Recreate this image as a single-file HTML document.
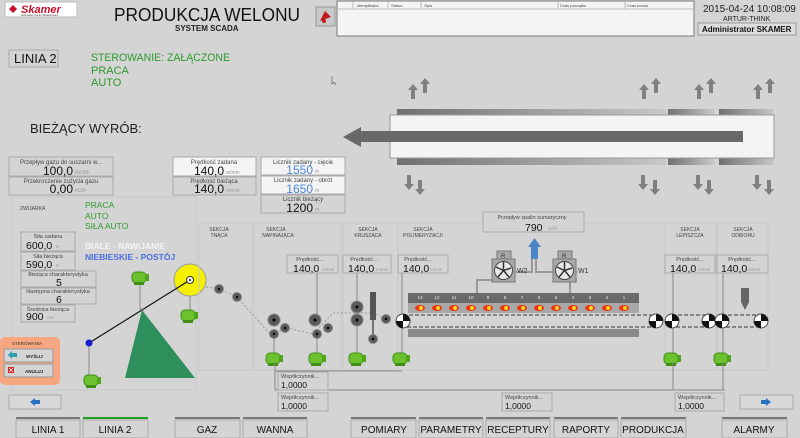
<!DOCTYPE html>
<html><head><meta charset="utf-8"><style>
body{margin:0;width:800px;height:438px;overflow:hidden;background:#d4d4d4;font-family:"Liberation Sans",sans-serif}
svg{display:block}
text{font-family:"Liberation Sans",sans-serif}
</style></head><body>
<svg width="800" height="438" viewBox="0 0 800 438" xmlns="http://www.w3.org/2000/svg">
<defs>
<linearGradient id="bar" x1="0" x2="1"><stop offset="0" stop-color="#707070"/><stop offset="1" stop-color="#c8c8c8"/></linearGradient>
<g id="up"><rect x="-2" y="5" width="4" height="10" fill="#808080"/><polygon points="-5,6 5,6 0,0" fill="#808080"/></g>
<g id="dn"><rect x="-2" y="0" width="4" height="10" fill="#808080"/><polygon points="-5,9 5,9 0,15" fill="#808080"/></g>
<g id="mot"><rect x="-8" y="-5" width="14" height="11" rx="4" fill="#6cc12e" stroke="#3f8f16"/><rect x="5" y="-3" width="4" height="7" fill="#4fa51c"/><rect x="-6" y="5" width="10" height="3" fill="#3f8f16"/></g>
<g id="rl"><circle r="6" fill="#5a5a5a" stroke="#888"/><circle r="1.5" fill="#000"/></g>
<g id="rs"><circle r="4.5" fill="#5a5a5a" stroke="#888"/><circle r="1.2" fill="#000"/></g>
<g id="end"><circle r="7" fill="#fff" stroke="#444"/><path d="M0,-7 A7,7 0 0,1 7,0 L0,0Z M0,7 A7,7 0 0,1 -7,0 L0,0Z" fill="#111"/></g>
<g id="fan"><rect x="0" y="0" width="23" height="23" fill="#a8a8a8" stroke="#777"/><circle cx="11.5" cy="11.5" r="9" fill="#e8e8e8" stroke="#444"/><path d="M11.5,11.5 L11.5,3 M11.5,11.5 L19,9 M11.5,11.5 L17,18 M11.5,11.5 L6,18 M11.5,11.5 L4,8" stroke="#333" stroke-width="1.5"/></g>
</defs>

<!-- header -->
<rect x="5" y="2" width="72" height="15" fill="#fff" stroke="#bbb"/>
<polygon points="9,9 13,5 17,9 13,13" fill="#c8102e"/>
<text x="21" y="13" font-size="11" font-weight="bold" font-style="italic" fill="#c8102e">Skamer</text>
<text x="21" y="16" font-size="2.5" fill="#333">Automation Control Measurement</text>
<text x="114" y="21" font-size="18" fill="#111" textLength="186" lengthAdjust="spacingAndGlyphs">PRODUKCJA WELONU</text>
<text x="175" y="31" font-size="8" font-weight="bold" fill="#222">SYSTEM SCADA</text>
<rect x="316" y="7" width="19" height="19" fill="#c8c8c8" stroke="#999"/>
<path d="M320,21 L325,11 L331,17 Z" fill="#c01818"/><circle cx="324" cy="21" r="2" fill="#c01818"/>
<rect x="337" y="1" width="357" height="35" fill="#f4f4f4" stroke="#777"/>
<line x1="337" y1="9" x2="694" y2="9" stroke="#bbb"/>
<g font-size="4" fill="#444"><text x="357" y="7">Identyfikator</text><text x="391" y="7">Status</text><text x="424" y="7">Opis</text><text x="560" y="7">Czas początku</text><text x="627" y="7">Czas końca</text></g>
<g stroke="#bbb"><line x1="353" y1="2" x2="353" y2="9"/><line x1="388" y1="2" x2="388" y2="9"/><line x1="421" y1="2" x2="421" y2="9"/><line x1="558" y1="2" x2="558" y2="9"/><line x1="625" y1="2" x2="625" y2="9"/></g>
<text x="703" y="12" font-size="10" fill="#222">2015-04-24 10:08:09</text>
<text x="723" y="21" font-size="7" fill="#222">ARTUR-THINK</text>
<rect x="698" y="23" width="98" height="12" fill="#ddd" stroke="#999"/>
<text x="702" y="32" font-size="8" font-weight="bold" fill="#111">Administrator SKAMER</text>

<rect x="9" y="50" width="49" height="17" fill="#d4d4d4" stroke="#aaa"/>
<text x="14" y="63" font-size="13" fill="#111">LINIA 2</text>
<g font-size="11" fill="#2e9a2e"><text x="91" y="61" textLength="139" lengthAdjust="spacingAndGlyphs">STEROWANIE: ZAŁĄCZONE</text><text x="91" y="74">PRACA</text><text x="91" y="86">AUTO</text></g>
<text x="30" y="133" font-size="13" fill="#222">BIEŻĄCY WYRÓB:</text>
<path d="M332,76 L332,84 L334,82 L336,85" stroke="#666" fill="none" stroke-width="0.7"/>

<!-- product -->
<rect x="397" y="109" width="269" height="6" fill="url(#bar)"/><rect x="668" y="109" width="46" height="6" fill="url(#bar)"/><rect x="719" y="109" width="55" height="6" fill="url(#bar)"/>
<rect x="397" y="158" width="269" height="7" fill="url(#bar)"/><rect x="668" y="158" width="46" height="7" fill="url(#bar)"/><rect x="719" y="158" width="55" height="7" fill="url(#bar)"/>
<rect x="390" y="115" width="384" height="43" fill="#f4f4f4" stroke="#999"/>
<rect x="360" y="131" width="383" height="11" fill="#686868"/>
<polygon points="343,137 361,127 361,147" fill="#686868"/>
<use href="#up" x="413" y="84"/><use href="#up" x="425" y="78"/><use href="#up" x="644" y="84"/><use href="#up" x="656" y="78"/><use href="#up" x="699" y="84"/><use href="#up" x="711" y="78"/><use href="#up" x="758" y="84"/><use href="#up" x="770" y="78"/>
<use href="#dn" x="409" y="175"/><use href="#dn" x="420" y="180"/><use href="#dn" x="643" y="175"/><use href="#dn" x="655" y="180"/><use href="#dn" x="698" y="175"/><use href="#dn" x="709" y="180"/><use href="#dn" x="757" y="175"/><use href="#dn" x="769" y="180"/>

<!-- value boxes -->
<g stroke="#aaa" fill="#d4d4d4">
<rect x="9" y="157" width="104" height="19"/><rect x="9" y="177" width="104" height="18"/>
<rect x="173" y="157" width="83" height="19" fill="#f4f4f4"/><rect x="173" y="177" width="83" height="18"/>
<rect x="261" y="157" width="84" height="18" fill="#f4f4f4"/><rect x="261" y="176" width="84" height="18" fill="#f4f4f4"/><rect x="261" y="195" width="84" height="18"/>
</g>
<g font-size="6" fill="#444" text-anchor="middle">
<text x="61" y="164">Przepływ gazu do suszarni w...</text><text x="61" y="183">Przekroczenie zużycia gazu</text>
<text x="214" y="164">Prędkość zadana</text><text x="214" y="183">Prędkość bieżąca</text>
<text x="303" y="164">Licznik zadany - cięcie</text><text x="303" y="182">Licznik zadany - obrót</text><text x="303" y="201">Licznik bieżący</text>
</g>
<g font-size="12" fill="#111" text-anchor="end">
<text x="73" y="175">100,0</text><text x="73" y="193">0,00</text>
<text x="224" y="175">140,0</text><text x="224" y="193">140,0</text>
<text x="313" y="174" fill="#4a86e0">1550</text><text x="313" y="193" fill="#4a86e0">1650</text><text x="313" y="212">1200</text>
</g>
<g font-size="5" fill="#999"><text x="75" y="174">Nm3/h</text><text x="75" y="192">m3/h</text><text x="226" y="174">m/min</text><text x="226" y="192">m/min</text><text x="315" y="173">m</text><text x="315" y="192">m</text><text x="315" y="211">m</text></g>

<!-- zwijarka -->
<rect x="12" y="197" width="184" height="193" fill="none" stroke="#c8c8c8"/>
<text x="20" y="210" font-size="5" fill="#444">ZWIJARKA</text>
<g font-size="8.5" fill="#2e9a2e"><text x="85" y="208">PRACA</text><text x="85" y="219">AUTO</text><text x="85" y="229">SIŁA AUTO</text></g>
<text x="85" y="249" font-size="8.5" font-weight="bold" fill="#f4f4f4">BIALE - NAWIJANIE</text>
<text x="85" y="260" font-size="8.5" font-weight="bold" fill="#4a6ee0">NIEBIESKIE - POSTÓJ</text>
<g stroke="#aaa" fill="#d4d4d4"><rect x="21" y="232" width="54" height="19"/><rect x="21" y="252" width="54" height="18"/><rect x="21" y="271" width="75" height="16"/><rect x="21" y="288" width="75" height="16"/><rect x="21" y="305" width="54" height="17"/></g>
<g font-size="5.5" fill="#444" text-anchor="middle"><text x="48" y="238">Siła zadana</text><text x="48" y="258">Siła bieżąca</text><text x="58" y="276">Bieżąca charakterystyka</text><text x="58" y="293">Następna charakterystyka</text><text x="48" y="311">Średnica bieżąca</text></g>
<g font-size="10.5" fill="#111"><text x="26" y="249">600,0</text><text x="26" y="268">590,0</text><text x="56" y="286">5</text><text x="56" y="303">6</text><text x="26" y="320">900</text></g>
<g font-size="4.5" fill="#999"><text x="56" y="248">N</text><text x="56" y="267">N</text><text x="47" y="319">mm</text></g>
<line x1="140" y1="283" x2="140" y2="310" stroke="#888"/><line x1="89" y1="343" x2="89" y2="375" stroke="#888"/><line x1="190" y1="280" x2="190" y2="310" stroke="#888"/>
<polygon points="142,310 125,378 195,378" fill="#2f8f5c"/>
<circle cx="190" cy="280" r="16" fill="#f5f000" stroke="#999"/>
<line x1="89" y1="343" x2="190" y2="280" stroke="#111" stroke-width="1.2"/>
<circle cx="142" cy="310" r="1.5" fill="#666"/>
<circle cx="190" cy="280" r="3.5" fill="#fff" stroke="#333"/><circle cx="190" cy="280" r="1" fill="#000"/>
<circle cx="89" cy="343" r="3.5" fill="#1a1ad0"/>
<use href="#mot" x="140" y="277"/><use href="#mot" x="189" y="315"/><use href="#mot" x="92" y="380"/>

<rect x="0" y="337" width="60" height="48" rx="5" fill="#f8a680"/>
<text x="12" y="345" font-size="4.5" fill="#333">STEROWANIA</text>
<rect x="4" y="349" width="49" height="13" fill="#d4d4d4" stroke="#999"/><rect x="4" y="364" width="49" height="13" fill="#d4d4d4" stroke="#999"/>
<polygon points="8,355 12,351 12,353 17,353 17,357 12,357 12,359" fill="#2aa0b0"/>
<rect x="8" y="367" width="6" height="6" fill="#e02020"/><path d="M9,368 L13,372 M13,368 L9,372" stroke="#fff" stroke-width="0.8"/>
<text x="26" y="358" font-size="4.5" font-weight="bold" fill="#222">WYŚLIJ</text><text x="25" y="373" font-size="4.5" font-weight="bold" fill="#222">ANULUJ</text>

<!-- sections -->
<g fill="none" stroke="#c8c8c8"><rect x="199" y="223" width="53" height="147"/><rect x="254" y="223" width="87" height="147"/><rect x="343" y="223" width="55" height="147"/><rect x="398" y="223" width="267" height="147"/><rect x="665" y="223" width="51" height="147"/><rect x="717" y="223" width="51" height="147"/></g>
<g font-size="5" fill="#444" text-anchor="middle">
<text x="219" y="231">SEKCJA</text><text x="219" y="237">TNĄCA</text>
<text x="276" y="231">SEKCJA</text><text x="278" y="237">NAPINAJĄCA</text>
<text x="368" y="231">SEKCJA</text><text x="368" y="237">KRUSZĄCA</text>
<text x="423" y="231">SEKCJA</text><text x="423" y="237">POLIMERYZACJI</text>
<text x="690" y="231">SEKCJA</text><text x="690" y="237">LEPISZCZA</text>
<text x="743" y="231">SEKCJA</text><text x="743" y="237">ODBIORU</text>
</g>
<g stroke="#aaa" fill="#d4d4d4"><rect x="287" y="255" width="51" height="18"/><rect x="343" y="255" width="48" height="18"/><rect x="398" y="255" width="50" height="18"/><rect x="665" y="255" width="50" height="18"/><rect x="717" y="255" width="51" height="18"/><rect x="483" y="212" width="101" height="20"/></g>
<g font-size="5.5" fill="#444" text-anchor="middle"><text x="310" y="261">Prędkość...</text><text x="364" y="261">Prędkość...</text><text x="418" y="261">Prędkość...</text><text x="690" y="261">Prędkość...</text><text x="742" y="261">Prędkość...</text><text x="532" y="219">Przepływ spalin sumaryczny</text></g>
<g font-size="10.5" fill="#111"><text x="293" y="272">140,0</text><text x="348" y="272">140,0</text><text x="403" y="272">140,0</text><text x="670" y="272">140,0</text><text x="721" y="272">140,0</text><text x="525" y="231">790</text></g>
<g font-size="4.5" fill="#999"><text x="322" y="271">m/min</text><text x="376" y="271">m/min</text><text x="430" y="271">m/min</text><text x="698" y="271">m/min</text><text x="748" y="271">m/min</text><text x="548" y="230">m³/h</text></g>

<!-- web path -->
<path d="M206,287 L219,289 L237,297 L270,334 L288,328 L313,334 L333,313 L375,313 L384,319" fill="none" stroke="#999" stroke-dasharray="2,2"/>
<g stroke="#888"><line x1="317" y1="273" x2="317" y2="320"/><line x1="357" y1="273" x2="357" y2="300"/><line x1="274" y1="338" x2="274" y2="355"/><line x1="317" y1="338" x2="317" y2="355"/><line x1="357" y1="325" x2="357" y2="355"/><line x1="402" y1="273" x2="402" y2="355"/><line x1="673" y1="273" x2="673" y2="355"/><line x1="723" y1="273" x2="723" y2="355"/></g>
<use href="#rs" x="219" y="289"/><use href="#rs" x="237" y="297"/>
<use href="#rl" x="274" y="320"/><use href="#rs" x="274" y="334"/><use href="#rs" x="285" y="328"/>
<use href="#rl" x="315" y="320"/><use href="#rs" x="317" y="334"/><use href="#rs" x="328" y="328"/>
<use href="#rl" x="357" y="307"/><use href="#rl" x="357" y="320"/>
<rect x="370" y="292" width="6" height="28" fill="#555"/><line x1="373" y1="320" x2="373" y2="339" stroke="#111"/>
<use href="#rs" x="373" y="339"/><use href="#rs" x="386" y="319"/>
<use href="#mot" x="274" y="358"/><use href="#mot" x="317" y="358"/><use href="#mot" x="357" y="358"/><use href="#mot" x="401" y="358"/><use href="#mot" x="672" y="358"/><use href="#mot" x="722" y="358"/>

<!-- oven -->
<rect x="408" y="293" width="231" height="10" fill="#6a6a6a"/>
<g font-size="4.5" fill="#eee" text-anchor="middle"><text x="420" y="299">13</text><text x="437" y="299">12</text><text x="454" y="299">11</text><text x="471" y="299">10</text><text x="488" y="299">9</text><text x="505" y="299">8</text><text x="522" y="299">7</text><text x="539" y="299">6</text><text x="556" y="299">5</text><text x="573" y="299">4</text><text x="590" y="299">3</text><text x="607" y="299">2</text><text x="624" y="299">1</text></g>
<rect x="408" y="303" width="231" height="10" fill="#a8a8a8"/>
<g fill="#f03010"><ellipse cx="420" cy="308" rx="5" ry="3"/><ellipse cx="437" cy="308" rx="5" ry="3"/><ellipse cx="454" cy="308" rx="5" ry="3"/><ellipse cx="471" cy="308" rx="5" ry="3"/><ellipse cx="488" cy="308" rx="5" ry="3"/><ellipse cx="505" cy="308" rx="5" ry="3"/><ellipse cx="522" cy="308" rx="5" ry="3"/><ellipse cx="539" cy="308" rx="5" ry="3"/><ellipse cx="556" cy="308" rx="5" ry="3"/><ellipse cx="573" cy="308" rx="5" ry="3"/><ellipse cx="590" cy="308" rx="5" ry="3"/><ellipse cx="607" cy="308" rx="5" ry="3"/><ellipse cx="624" cy="308" rx="5" ry="3"/></g>
<g fill="#ffd820"><circle cx="421" cy="308" r="2"/><circle cx="438" cy="308" r="2"/><circle cx="455" cy="308" r="2"/><circle cx="472" cy="308" r="2"/><circle cx="489" cy="308" r="2"/><circle cx="506" cy="308" r="2"/><circle cx="523" cy="308" r="2"/><circle cx="540" cy="308" r="2"/><circle cx="557" cy="308" r="2"/><circle cx="574" cy="308" r="2"/><circle cx="591" cy="308" r="2"/><circle cx="608" cy="308" r="2"/><circle cx="625" cy="308" r="2"/></g>
<rect x="408" y="329" width="231" height="8" fill="#8a8a8a"/>
<g fill="none" stroke="#333" stroke-dasharray="4,2"><rect x="403" y="315" width="253" height="12"/><rect x="672" y="315" width="37" height="12"/><rect x="722" y="315" width="40" height="12"/></g>
<use href="#end" x="403" y="321"/><use href="#end" x="656" y="321"/><use href="#end" x="672" y="321"/><use href="#end" x="709" y="321"/><use href="#end" x="722" y="321"/><use href="#end" x="761" y="321"/>
<rect x="741" y="288" width="8" height="14" fill="#666"/><polygon points="741,302 749,302 745,310" fill="#666"/>
<!-- fans -->
<path d="M477,293 L477,280 L492,280 M570,293 L570,280 L577,280 M532,259 L532,272 L492,272 M536,259 L536,272 L577,272" fill="none" stroke="#999" stroke-width="2"/>
<rect x="497" y="251" width="14" height="8" fill="#a8a8a8" stroke="#777"/><rect x="558" y="251" width="14" height="8" fill="#a8a8a8" stroke="#777"/>
<text x="501" y="258" font-size="6" fill="#333">R</text><text x="562" y="258" font-size="6" fill="#333">R</text>
<use href="#fan" x="492" y="259"/><use href="#fan" x="553" y="259"/>
<text x="517" y="273" font-size="7" fill="#333">W2</text><text x="578" y="273" font-size="7" fill="#333">W1</text>
<rect x="531" y="246" width="7" height="13" fill="#4a86c8"/><polygon points="528,247 541,247 534.5,238" fill="#4a86c8"/>

<!-- bottom lines -->
<g stroke="#888"><line x1="275" y1="371" x2="402" y2="371"/><line x1="275" y1="362" x2="275" y2="390"/><line x1="275" y1="390" x2="725" y2="390"/><line x1="673" y1="362" x2="673" y2="390"/><line x1="723" y1="362" x2="723" y2="390"/></g>
<g stroke="#aaa" fill="#d4d4d4"><rect x="278" y="372" width="50" height="18"/><rect x="278" y="393" width="50" height="18"/><rect x="502" y="393" width="50" height="18"/><rect x="675" y="393" width="49" height="18"/></g>
<g font-size="5.5" fill="#444"><text x="281" y="378">Współczynnik...</text><text x="281" y="399">Współczynnik...</text><text x="505" y="399">Współczynnik...</text><text x="678" y="399">Współczynnik...</text></g>
<g font-size="8.5" fill="#111"><text x="281" y="388">1,0000</text><text x="281" y="409">1,0000</text><text x="505" y="409">1,0000</text><text x="678" y="409">1,0000</text></g>

<rect x="9" y="395" width="52" height="14" fill="#d8d8d8" stroke="#aaa"/><polygon points="30,402 35,398 35,400 40,400 40,404 35,404 35,406" fill="#2a70c0"/>
<rect x="740" y="395" width="53" height="14" fill="#d8d8d8" stroke="#aaa"/><polygon points="771,402 766,398 766,400 761,400 761,404 766,404 766,406" fill="#2a70c0"/>

<!-- tabs -->
<g fill="#d4d4d4" stroke="#aaa">
<rect x="16" y="420" width="64" height="18"/><rect x="83" y="420" width="65" height="18"/><rect x="175" y="420" width="65" height="18"/><rect x="243" y="420" width="64" height="18"/><rect x="351" y="420" width="65" height="18"/><rect x="419" y="420" width="64" height="18"/><rect x="486" y="420" width="64" height="18"/><rect x="554" y="420" width="64" height="18"/><rect x="621" y="420" width="65" height="18"/><rect x="722" y="420" width="65" height="18"/>
</g>
<g fill="#777"><rect x="16" y="417" width="64" height="2"/><rect x="175" y="417" width="65" height="2"/><rect x="243" y="417" width="64" height="2"/><rect x="351" y="417" width="65" height="2"/><rect x="419" y="417" width="64" height="2"/><rect x="486" y="417" width="64" height="2"/><rect x="554" y="417" width="64" height="2"/><rect x="621" y="417" width="65" height="2"/><rect x="722" y="417" width="65" height="2"/></g>
<rect x="83" y="417" width="65" height="2" fill="#1ea01e"/>
<g font-size="10" fill="#111" text-anchor="middle"><text x="48" y="433">LINIA 1</text><text x="115" y="433">LINIA 2</text><text x="207" y="433">GAZ</text><text x="275" y="433">WANNA</text><text x="384" y="433">POMIARY</text><text x="451" y="433">PARAMETRY</text><text x="518" y="433">RECEPTURY</text><text x="586" y="433">RAPORTY</text><text x="653" y="433">PRODUKCJA</text><text x="754" y="433">ALARMY</text></g>
</svg>
</body></html>
